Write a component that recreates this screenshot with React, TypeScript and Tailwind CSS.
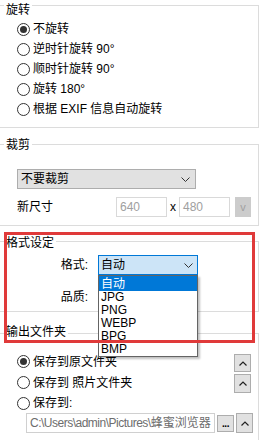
import type { ReactNode } from "react";

function Radio({ checked = false, label }: { checked?: boolean; label: string }) {
  return (
    <div className="flex h-5 items-center gap-[3px]">
      <span className="flex h-[13px] w-[13px] shrink-0 items-center justify-center rounded-full border border-[#333333] bg-white">
        {checked && <span className="h-[7px] w-[7px] rounded-full bg-[#333333]" />}
      </span>
      <span className="whitespace-nowrap">{label}</span>
    </div>
  );
}

function Chevron() {
  return (
    <svg width="9" height="5" viewBox="0 0 9 5" className="shrink-0">
      <polyline points="0.5,0.5 4.5,4.5 8.5,0.5" fill="none" stroke="#333333" strokeWidth="1" />
    </svg>
  );
}

function Caret() {
  return (
    <svg width="8" height="5" viewBox="0 0 8 5">
      <polyline points="0.5,4.5 4,1 7.5,4.5" fill="none" stroke="#222222" strokeWidth="1.2" />
    </svg>
  );
}

function UpButton({ className = "" }: { className?: string }) {
  return (
    <div className={`flex w-[17px] shrink-0 items-center justify-center border border-[#adadad] bg-[#e1e1e1] ${className}`}>
      <Caret />
    </div>
  );
}

function Group({
  title,
  titleClass,
  className,
  children,
}: {
  title: string;
  titleClass: string;
  className: string;
  children: ReactNode;
}) {
  return (
    <div className={`-ml-1 mr-[5px] border border-[#dcdcdc] ${className}`}>
      <div className={`ml-[7px] w-fit bg-white px-[2px] leading-4 ${titleClass}`}>{title}</div>
      {children}
    </div>
  );
}

const formats = ["JPG", "PNG", "WEBP", "BPG", "BMP"];

export default function App() {
  return (
    <div className="relative h-[440px] w-[264px] overflow-hidden bg-white font-['Liberation_Sans','Noto_Sans_CJK_SC',sans-serif] text-[12px] text-black">
      <Group title="旋转" titleClass="-mt-[4px]" className="mt-[5px] pb-2">
        <div className="mt-px pl-5">
          <Radio checked label="不旋转" />
          <Radio label="逆时针旋转 90°" />
          <Radio label="顺时针旋转 90°" />
          <Radio label="旋转 180°" />
          <Radio label="根据 EXIF 信息自动旋转" />
        </div>
      </Group>

      <Group title="裁剪" titleClass="-mt-[8px]" className="mt-4 pb-2">
        <div className="pl-5">
          <div className="mt-4 flex h-5 w-[179px] items-center justify-between border border-[#adadad] bg-[#e1e1e1] pl-[3px] pr-[5px]">
            <span>不要裁剪</span>
            <Chevron />
          </div>
          <div className="mt-2 flex h-5 items-center">
            <span className="w-[99px]">新尺寸</span>
            <div className="flex h-5 w-[51px] items-center border border-[#d9d9d9] bg-white px-[3px] text-[#a0a0a0]">640</div>
            <span className="w-3 text-center">x</span>
            <div className="flex h-5 w-[51px] items-center border border-[#d9d9d9] bg-white px-[3px] text-[#a0a0a0]">480</div>
            <div className="ml-[5px] flex h-5 w-4 items-center justify-center bg-[#cccccc] text-[11px] text-[#a0a0a0]">v</div>
          </div>
        </div>
      </Group>

      <Group title="格式设定" titleClass="-mt-[7px]" className="mt-[15px] pb-1">
        <div className="pl-5">
          <div className="mt-1 flex h-5 items-center">
            <span className="w-[71px] text-right">格式:</span>
            <div className="relative ml-[10px]">
              <div className="flex h-5 w-[100px] items-center justify-between border border-[#0078d7] bg-[#cce4f7] pl-[2px] pr-[4px]">
                <span>自动</span>
                <Chevron />
              </div>
              <div className="absolute left-0 top-full z-10 w-[100px] border border-[#646464] bg-white shadow-[2px_2px_2px_rgba(0,0,0,0.25)]">
                <div className="flex h-[15px] items-center bg-[#0078d7] pl-[2px] text-white">自动</div>
                {formats.map((f) => (
                  <div key={f} className="flex h-[13px] items-center pl-[2px] leading-[13px]">
                    {f}
                  </div>
                ))}
              </div>
            </div>
          </div>
          <div className="mt-3 flex h-5 items-center">
            <span className="w-[71px] text-right">品质:</span>
          </div>
        </div>
      </Group>

      <Group title="输出文件夹" titleClass="-mt-[10px]" className="mt-[21px] pb-4">
        <div className="mt-[11px] pl-5 pr-[7px]">
          <div className="flex items-center justify-between">
            <Radio checked label="保存到原文件夹" />
            <UpButton className="mt-[3px] h-[18px]" />
          </div>
          <div className="flex items-center justify-between">
            <Radio label="保存到 照片文件夹" />
            <UpButton className="mt-[2px] h-[19px]" />
          </div>
          <Radio label="保存到:" />
          <div className="ml-[9px] flex h-5 items-center gap-[2px]">
            <div className="flex h-5 w-[189px] shrink-0 items-center overflow-hidden whitespace-nowrap border border-[#d0d0d0] bg-white pl-[3px] text-[#6d6d6d]">
              <span className="tracking-[-0.5px]">C:\Users\admin\Pictures\</span>
              <span>蜂蜜浏览器</span>
            </div>
            <div className="flex h-[17px] w-[17px] shrink-0 items-end justify-center border border-[#adadad] bg-[#e1e1e1] pb-[2px] text-[10px] font-bold leading-none tracking-[-0.5px]">
              ...
            </div>
            <UpButton className="h-5" />
          </div>
        </div>
      </Group>

      <div className="pointer-events-none absolute left-1 top-[232px] z-20 h-[111px] w-[251px] border-[3px] border-[#e03a3a]" />
    </div>
  );
}
